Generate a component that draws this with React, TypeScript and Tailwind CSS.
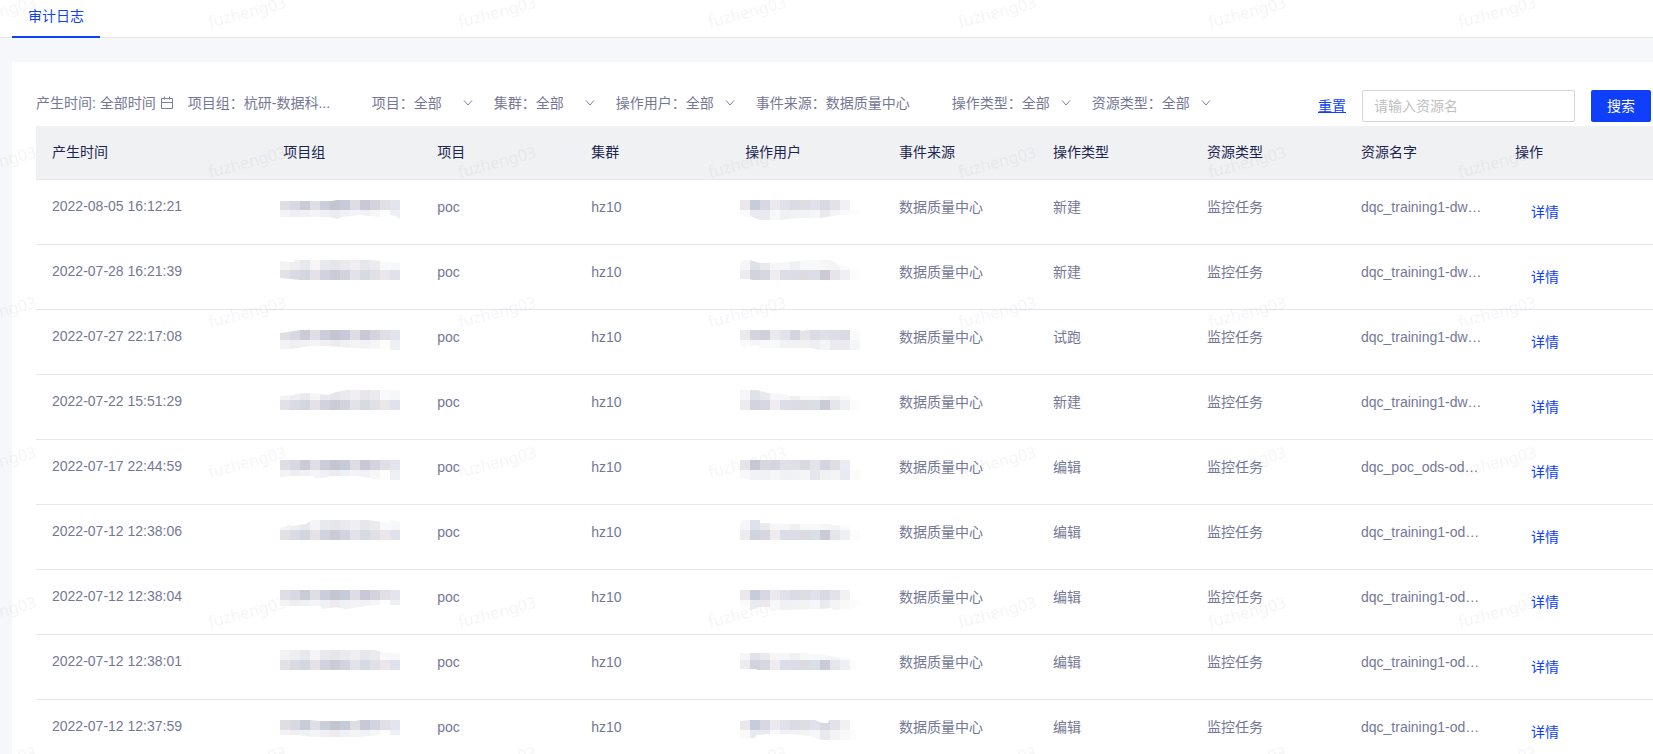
import clsx from 'clsx';

interface Mosaic {
  top: string[];
  bottom: string[];
  clip: string;
}

interface AuditLog {
  time: string;
  group: Mosaic;
  project: string;
  cluster: string;
  user: Mosaic;
  source: string;
  action: string;
  resourceType: string;
  resourceName: string;
}

interface Filter {
  id: string;
  label: string;
  value: string;
  width: string;
  arrow: boolean;
}

const GROUP_DARK = ['#e0dee4', '#d7d8e1', '#c9cbd6', '#dfdee4', '#cacddc', '#c4c5cf', '#c7cad9', '#dedde4', '#c8c8d6', '#d3d4df', '#e1dfe5', '#e2e5ee'];
const GROUP_FADE = ['#f3f3f5', '#efeff1', '#f1f1f4', '#f5f5f7', '#f0f0f4', '#ececf0', '#f0f1f5', '#f4f4f6', '#f2f2f5', '#f6f6f7', '#fdfdfd', '#eef0f4'];
const GROUP_LIGHT = ['#f3f3f5', '#efeff2', '#e8e9ee', '#f5f5f8', '#e8e9ee', '#e5e5ea', '#e9e9ee', '#f0eef2', '#e6e6ec', '#eaeaef', '#f8f9fb', '#f6f7f9'];
const GROUP_BASE = ['#e3e1e6', '#d9dae3', '#d3d5df', '#e4e2e7', '#d0d3df', '#cbcad5', '#d2d3de', '#e3e2e8', '#d8dae2', '#e1e0e7', '#ebe6ea', '#dfe2ec'];

const USER_DARK = ['#ebe7ea', '#c8ccda', '#d7d8e1', '#ebe9ed', '#dfe2eb', '#dbdbe4', '#dedde4', '#e0e1ea', '#d9d9e2', '#e3e2e8', '#f0f0f5', '#ffffff'];
const USER_FADE = ['#fafafa', '#e9eaef', '#e9eaee', '#f7f8f9', '#f1f1f4', '#f0f2f5', '#f2f3f5', '#f5f6f8', '#e9e9ee', '#f4f4f6', '#f9f9fa', '#fcfcfc'];
const USER_LIGHT = ['#f6f5f7', '#dfe2ea', '#eae9ee', '#f6f5f7', '#f4f6f8', '#f0f0f3', '#f7f8fa', '#f6f8f9', '#f6f6f7', '#f4f4f6', '#fafafb', '#ffffff'];
const USER_BASE = ['#ecebed', '#d1d4de', '#d6d7e0', '#eeecef', '#dbdee8', '#dbdce5', '#dddae1', '#dadee7', '#cccad6', '#e6e5eb', '#eff0f5', '#fcfcfd'];

const group = (odd: boolean, clip: string): Mosaic => ({
  top: odd ? GROUP_DARK : GROUP_LIGHT,
  bottom: odd ? GROUP_FADE : GROUP_BASE,
  clip
});

const user = (odd: boolean, clip: string): Mosaic => ({
  top: odd ? USER_DARK : USER_LIGHT,
  bottom: odd ? USER_FADE : USER_BASE,
  clip
});

const common = {
  project: 'poc',
  cluster: 'hz10',
  source: '数据质量中心',
  resourceType: '监控任务'
};

const logs: AuditLog[] = [
  {
    ...common,
    time: '2022-08-05 16:12:21',
    group: group(true, '0,1 52,1 57,0 120,0 120,19 115,16 110,15 100,17 80,15 62,17 57,19 50,17 0,17'),
    user: user(true, '0,0 110,0 110,10 119,10 119,14 100,15 80,18 60,18 40,20 20,20 10,16 7,17 0,14'),
    action: '新建',
    resourceName: 'dqc_training1-dw…'
  },
  {
    ...common,
    time: '2022-07-28 16:21:39',
    group: group(false, '0,1 10,2 14,2 15,0 92,0 105,2 120,3 120,20 20,20 0,18'),
    user: user(false, '0,3 4,0 10,0 20,3 50,2 66,0 90,0 100,5 110,7 110,10 120,10 120,20 12,20 10,19 0,19'),
    action: '新建',
    resourceName: 'dqc_training1-dw…'
  },
  {
    ...common,
    time: '2022-07-27 22:17:08',
    group: group(true, '0,3 8,2 20,0 120,0 120,20 110,20 100,19 70,18 50,16 30,16 10,19 0,19'),
    user: {
      top: ['#e9e9ee', '#d5d5de', '#d0d0da', '#e9e9ee', '#e0e3ea', '#d5d5df', '#e6e4e9', '#dadbe4', '#dfe0e7', '#dcdde5', '#d9dae4', '#fafafb'],
      bottom: ['#f9f9f9', '#f5f5f7', '#f9f9fa', '#f8f9fa', '#f2f2f4', '#f1f1f3', '#f1f1f3', '#efeff3', '#f4f5f8', '#ebebef', '#ebebef', '#f5f6fa'],
      clip: '0,0 60,0 63,1 66,0 110,0 120,2 120,20 80,20 70,18 20,18 18,15 10,16 4,18 0,16'
    },
    action: '试跑',
    resourceName: 'dqc_training1-dw…'
  },
  {
    ...common,
    time: '2022-07-22 15:51:29',
    group: group(false, '0,6 14,5 15,4 30,3 48,5 56,2 68,0 120,0 120,20 0,20'),
    user: user(false, '0,0 17,0 28,3 42,4 50,6 105,6 110,5 110,10 120,10 120,20 0,20'),
    action: '新建',
    resourceName: 'dqc_training1-dw…'
  },
  {
    ...common,
    time: '2022-07-17 22:44:59',
    group: group(true, '0,0 120,0 120,20 100,20 90,18 75,16 52,16 36,19 34,16 12,16 0,17'),
    user: {
      top: ['#e7e4e8', '#c5c7d5', '#d7d7df', '#d4d5de', '#dfe0ea', '#e0dfe6', '#d9d9e1', '#e2e4ea', '#d4d5df', '#e0dee5', '#ebecf1', '#ffffff'],
      bottom: ['#f8f8fa', '#f1f2f6', '#f1f2f5', '#f6f6f8', '#eff1f4', '#f1f2f5', '#f4f5f7', '#e6e7ed', '#f1f0f3', '#f4f4f6', '#e9e9f0', '#fbfbfb'],
      clip: '0,0 110,0 110,10 120,10 120,20 10,20 0,18'
    },
    action: '编辑',
    resourceName: 'dqc_poc_ods-od…'
  },
  {
    ...common,
    time: '2022-07-12 12:38:06',
    group: group(false, '0,8 5,7 8,4 11,6 26,4 32,0 88,0 102,2 108,2 112,0 120,2 120,20 0,20'),
    user: user(false, '0,4 3,0 20,0 20,3 50,4 90,4 92,5 110,6 110,10 120,10 120,20 0,20'),
    action: '编辑',
    resourceName: 'dqc_training1-od…'
  },
  {
    ...common,
    time: '2022-07-12 12:38:04',
    group: group(true, '0,0 120,0 120,15 110,15 108,14 85,16 75,18 65,19 57,17 42,19 41,16 0,16'),
    user: user(true, '0,0 110,0 110,10 120,10 120,15 112,19 93,20 92,18 80,19 40,20 30,20 29,17 19,17 10,20 9,16 0,16'),
    action: '编辑',
    resourceName: 'dqc_training1-od…'
  },
  {
    ...common,
    time: '2022-07-12 12:38:01',
    group: group(false, '0,0 95,0 102,2 120,4 120,20 0,20'),
    user: user(false, '0,3 62,3 80,4 95,7 110,8 117,11 115,20 17,20 16,19 0,19'),
    action: '编辑',
    resourceName: 'dqc_training1-od…'
  },
  {
    ...common,
    time: '2022-07-12 12:37:59',
    group: group(true, '0,0 30,0 40,1 75,1 80,0 120,0 120,15 110,15 100,15 80,17 30,17 20,15 0,15'),
    user: user(true, '0,1 10,0 75,0 82,3 88,3 89,0 110,0 110,10 117,10 116,20 81,20 70,16 50,14 30,14 16,15 15,18 0,18'),
    action: '编辑',
    resourceName: 'dqc_training1-od…'
  }
];

const filters: Filter[] = [
  { id: 'group', label: '项目组：', value: '杭研-数据科...', width: 'w-[108px]', arrow: false },
  { id: 'project', label: '项目：', value: '全部', width: 'w-[60px]', arrow: true },
  { id: 'cluster', label: '集群：', value: '全部', width: 'w-[60px]', arrow: true },
  { id: 'user', label: '操作用户：', value: '全部', width: 'w-[50px]', arrow: true },
  { id: 'source', label: '事件来源：', value: '数据质量中心', width: 'w-[106px]', arrow: false },
  { id: 'action', label: '操作类型：', value: '全部', width: 'w-[50px]', arrow: true },
  { id: 'resource', label: '资源类型：', value: '全部', width: 'w-[50px]', arrow: true }
];

const headers = ['产生时间', '项目组', '项目', '集群', '操作用户', '事件来源', '操作类型', '资源类型', '资源名字', '操作'];

function MaskedText({ id, mosaic }: { id: string; mosaic: Mosaic }) {
  return (
    <svg
      className="relative z-10"
      width="120"
      height="20"
      viewBox="0 0 120 20"
      shapeRendering="crispEdges"
      aria-hidden="true"
    >
      <clipPath id={id}>
        <polygon points={mosaic.clip} />
      </clipPath>
      <g clipPath={`url(#${id})`}>
        {[mosaic.top, mosaic.bottom].map((colors, row) =>
          colors.map((color, col) => (
            <rect key={`${row}-${col}`} x={col * 10} y={row * 10} width="10" height="10" fill={color} />
          ))
        )}
      </g>
    </svg>
  );
}

function CalendarIcon() {
  return (
    <svg width="14" height="14" viewBox="0 0 14 14" fill="none" stroke="#7c809d" aria-hidden="true">
      <path d="M1.5 2.5h11v10h-11zM1.5 6.5h11M4.5 0.5v3M9.5 0.5v3" />
    </svg>
  );
}

function FilterSelect({ filter }: { filter: Filter }) {
  return (
    <div className="flex items-center mr-5 shrink-0">
      <label htmlFor={filter.id}>{filter.label}</label>
      <div className={clsx('relative flex items-center', filter.width)}>
        <select id={filter.id} className="w-full h-6 appearance-none bg-transparent outline-none">
          <option>{filter.value}</option>
        </select>
        {filter.arrow && (
          <svg
            className="absolute right-0 pointer-events-none"
            width="12"
            height="12"
            viewBox="0 0 12 12"
            fill="none"
            stroke="#7c809d"
            aria-hidden="true"
          >
            <path d="M2 3.5l4 4.5 4-4.5" />
          </svg>
        )}
      </div>
    </div>
  );
}

function Watermark() {
  return (
    <svg className="absolute inset-0 w-full h-full pointer-events-none" aria-hidden="true">
      <defs>
        <pattern id="watermark" x="200" y="-60" width="250" height="150" patternUnits="userSpaceOnUse">
          <text
            x="10"
            y="88"
            transform="rotate(-15 10 88)"
            className="font-['Noto_Sans',sans-serif] text-base"
            fill="#000000"
            fillOpacity="0.04"
          >
            fuzheng03
          </text>
        </pattern>
      </defs>
      <rect width="100%" height="100%" fill="url(#watermark)" />
    </svg>
  );
}

export default function App() {
  return (
    <div className="relative h-screen overflow-hidden bg-[#f5f7fb] font-['Liberation_Sans','Noto_Sans_CJK_SC',sans-serif] text-sm text-[#747896]">
      <nav className="flex h-[38px] border-b border-[#e4e6eb] bg-white pl-3">
        <a href="#audit" className="h-[38px] border-b-2 border-[#0f3ffb] px-4 leading-8 text-[#0f3ffb]">
          审计日志
        </a>
      </nav>

      <main className="mt-6 ml-3 bg-white pt-7 pl-6">
        <div className="flex items-start h-8 mb-1 pr-0.5">
          <div className="flex items-center h-[26px]">
            <button type="button" className="flex items-center gap-1 mr-3.5 shrink-0">
              <span>产生时间: 全部时间</span>
              <CalendarIcon />
            </button>
            {filters.map(filter => (
              <FilterSelect key={filter.id} filter={filter} />
            ))}
          </div>
          <form className="flex items-center gap-4 ml-auto shrink-0" onSubmit={e => e.preventDefault()}>
            <button type="reset" className="text-[#0f3ffb] underline underline-offset-1">
              重置
            </button>
            <input
              type="text"
              aria-label="资源名"
              placeholder="请输入资源名"
              className="w-[213px] h-8 px-[11px] rounded-xs border border-[#d4d5d9] outline-none placeholder:text-[#bfbfbf]"
            />
            <button type="submit" className="w-[60px] h-8 rounded-xs bg-[#0f3ffb] text-white">
              搜索
            </button>
          </form>
        </div>

        <table className="w-full table-fixed text-left">
          <thead>
            <tr className="h-[53px] border-b border-[#e4e6ec] bg-[#f0f1f3] text-[#1b2550]">
              {headers.map((header, index) => (
                <th key={header} className={clsx('px-4 font-normal', index === 0 && 'w-[14.3%]')}>
                  {header}
                </th>
              ))}
            </tr>
          </thead>
          <tbody>
            {logs.map((log, index) => (
              <tr key={log.time} className="h-[65px] border-b border-[#e4e5ee] align-top leading-5">
                <td className="px-4 pt-4">{log.time}</td>
                <td className={clsx('pl-[13px]', index % 2 === 0 ? 'pt-5' : 'pt-[15px]')}>
                  <MaskedText id={`group-${index}`} mosaic={log.group} />
                </td>
                <td className="px-4 pt-[17px]">{log.project}</td>
                <td className="px-4 pt-[17px]">{log.cluster}</td>
                <td className={clsx('pl-[11px]', index % 2 === 0 ? 'pt-5' : 'pt-[15px]')}>
                  <MaskedText id={`user-${index}`} mosaic={log.user} />
                </td>
                <td className="px-4 pt-[17px]">{log.source}</td>
                <td className="px-4 pt-[17px]">{log.action}</td>
                <td className="px-4 pt-[17px]">{log.resourceType}</td>
                <td className="px-4 pt-[17px] whitespace-nowrap">{log.resourceName}</td>
                <td className="px-8 pt-[22px]">
                  <a href={`#log-${index}`} className="text-[#0f3ffb]">
                    详情
                  </a>
                </td>
              </tr>
            ))}
          </tbody>
        </table>
      </main>

      <Watermark />
    </div>
  );
}
